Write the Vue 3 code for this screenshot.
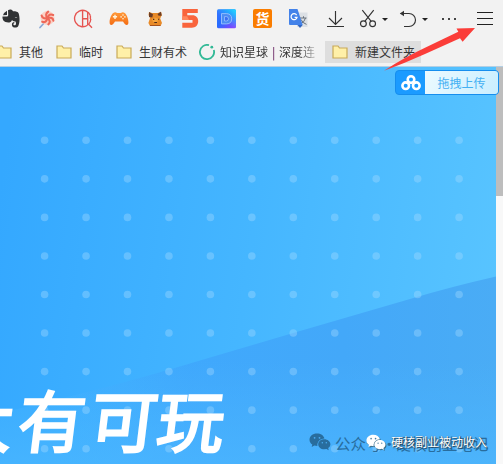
<script setup>
const dots = []
for (let row = 0; row < 9; row++) {
  for (let col = 0; col < 11; col++) {
    dots.push({ x: 44.6 + col * 41.45, y: 73.3 + row * 38.55 })
  }
}
</script>

<template>
  <div class="window">
    <header class="chrome">
      <div class="toolbar">
        <div class="extensions">
          <svg class="ext" viewBox="0 0 20 20">
            <path d="M2 6.2L6 6V1.7Q2.6 3.6 2 6.2Z" fill="#303234" />
            <path d="M7 1.2C9-.1 11.3.7 12 2.2C15 2.3 17 2.5 17.6 4.2C19 8 18.8 14 17.3 17C16.2 19.2 12 19.1 11.2 17C10.4 14.9 11.3 13 13.3 12.9V14.3C12 14.5 12.1 16.2 13.4 16.3C15.4 16.4 15.2 13.7 14.5 12.4C12.5 12.5 11.5 11.9 11 11C10 14 7 13.8 4.5 13C2.2 12.3 1.2 9.6 1.5 7.4H6.3Q7.2 7.4 7.2 6.3Z" fill="#303234" />
            <path d="M13.6 8.2Q15.2 7.3 16.3 9Z" fill="#eee" />
          </svg>
          <svg class="ext" viewBox="0 0 20 20">
            <path d="M8 13L3 18.5" stroke="#8ca9d5" stroke-width="1.7" stroke-linecap="round" />
            <circle cx="10.5" cy="9" r="7" fill="#fbd0c4" />
            <g fill="none" stroke="#ee6858" stroke-width="2.1" stroke-linecap="round">
              <path d="M10.5 9Q7.4 5.6 11.2 2.7" />
              <path d="M10.5 9Q12 4 16.2 6" />
              <path d="M10.5 9Q15.8 7.7 16.4 11.6" />
              <path d="M10.5 9Q14.5 12.6 11.4 15.4" />
              <path d="M10.5 9Q9.2 14.2 5.2 12.8" />
              <path d="M10.5 9Q5.5 10.3 4.6 6.6" />
            </g>
          </svg>
          <svg class="ext" viewBox="0 0 20 20" fill="none" stroke="#e65451" stroke-width="1.35">
            <path d="M14.5 16.2A8.2 8.2 0 1 1 17.4 6.5M17.8 10A8.2 8.2 0 0 1 15.6 15.2L19 18.8" />
            <path d="M9.6 1V17.7M9.6 9.7H14.7M14.7 3V16.2M17.4 6.5V10" />
          </svg>
          <svg class="ext" viewBox="0 0 20 20">
            <defs>
              <linearGradient id="pad" x2="0" y2="1"><stop stop-color="#ff9a3b" /><stop offset="1" stop-color="#f46c13" /></linearGradient>
            </defs>
            <path d="M5.2 3.5Q7 3 8 4H12Q13 3 14.8 3.5C18 4.2 20.4 13 19 15.3C17.6 17.4 15.3 14.5 14 12.4H6C4.7 14.5 2.4 17.4 1 15.3C-.4 13 2 4.2 5.2 3.5Z" fill="url(#pad)" />
            <path d="M6 5.7V10M3.9 7.8H8.1" stroke="#fff4dd" stroke-width="1.4" />
            <g fill="#fff4dd"><circle cx="14" cy="6" r=".8" /><circle cx="14" cy="9.8" r=".8" /><circle cx="12.1" cy="7.9" r=".8" /><circle cx="15.9" cy="7.9" r=".8" /></g>
          </svg>
          <svg class="ext" viewBox="0 0 20 20">
            <path d="M4 3L7 4H13L16 2.7L16.8 6L15.2 9.5L17 14L15.5 17H5L3.4 14L5 9L3.5 6Z" fill="#e88a28" />
            <path d="M4 3L8 5.3L7.3 8.6L4 8ZM12.5 5L16 2.7L16.7 6.7L13.6 6.7Z" fill="#6b3d25" />
            <path d="M7 10L10 8.5L14 10L12 13H8Z" fill="#f5a33c" />
            <path d="M8 10.4H9.3M13 10.2H14.2M9.3 13.5H12" stroke="#4e2c19" stroke-width="1.1" />
            <path d="M5 16.5H15.5" stroke="#a65320" />
          </svg>
          <svg class="ext" viewBox="0 0 20 20">
            <path d="M1.3 0H16.8V4H6.3V6.2H11.5C15 6.2 17.2 8.8 17.2 12.1C17.2 16.2 14.6 18.8 10.8 18.8H1.3V13.7H11.5V11H1.3Z" fill="#f9643c" />
            <path d="M1.3 7.2H6.2L8 11H1.3Z" fill="#ff875d" />
          </svg>
          <svg class="ext" viewBox="0 0 20 20">
            <defs>
              <linearGradient id="violet" x1="0" x2="1" y2="1"><stop stop-color="#3876ff" /><stop offset=".45" stop-color="#266cff" /><stop offset="1" stop-color="#9a3cff" /></linearGradient>
              <linearGradient id="cyan" x1="0" y1="1" x2="1" y2="0"><stop offset=".4" stop-color="#20cffc" stop-opacity="0" /><stop offset="1" stop-color="#20e1ff" /></linearGradient>
            </defs>
            <rect x="0" y=".2" width="19" height="19" rx="1.5" fill="url(#violet)" />
            <rect x="0" y=".2" width="19" height="19" rx="1.5" fill="url(#cyan)" />
            <path d="M4.5 4.6H9.7Q14.7 5 14.7 9.8Q14.7 14.7 9.7 14.9H4.5Z" fill="#4c8cf3" stroke="#a4caff" stroke-width=".8" />
            <path d="M7.5 7.6H9.5Q11.5 7.8 11.5 9.8Q11.5 11.8 9.5 12H7.5Z" fill="#3b6ef2" stroke="#a4caff" stroke-width=".7" />
          </svg>
          <span class="ext cargo">货</span>
          <svg class="ext" viewBox="0 0 20 20">
            <rect x="8" y="3.5" width="10.5" height="14.5" fill="#dce0e5" />
            <path d="M11 9H17.5M14.5 7.3V9M16.5 9Q15.5 13 11.5 15M12 10.5Q13.5 14 17.5 15.4" fill="none" stroke="#68717b" stroke-width="1" />
            <path d="M0 0H8.5L13.7 16H1Q0 16 0 15Z" fill="#4382e9" />
            <path d="M8.5 15.9H13.7L11 19Z" fill="#3266c0" />
            <path d="M7.6 6.1A3 3 0 1 0 8 8.4H5.6" fill="none" stroke="#fff" stroke-width="1.25" />
          </svg>
        </div>
        <div class="actions">
          <svg class="download" viewBox="0 0 18 20"><path d="M9.5 2V15.5M3 9L9.5 15.5L16 9M1 17.5H18" /></svg>
          <svg class="scissors" viewBox="0 0 18 20">
            <path d="M3.3 1.2L12.2 12.4M14.7 1.2L5.8 12.4" />
            <circle cx="4.4" cy="14.7" r="2.9" /><circle cx="13.6" cy="14.7" r="2.9" />
          </svg>
          <span class="caret"></span>
          <svg class="undo" viewBox="0 0 18 20"><path d="M1.5 4.5H10A6.2 6.2 0 0 1 10 17.5H5" /><path d="M5 1.7L.8 4.5L5 7.3Z" class="head" /></svg>
          <span class="caret"></span>
          <span class="more"><i></i><i></i><i></i></span>
          <span class="menu"><i></i><i></i><i></i></span>
        </div>
      </div>
      <nav class="bookmarks">
        <span class="mark"><svg class="folder" viewBox="0 0 16 14"><path d="M1 1H6L7.5 3H15V13H1Z" /></svg>其他</span>
        <span class="mark"><svg class="folder" viewBox="0 0 16 14"><path d="M1 1H6L7.5 3H15V13H1Z" /></svg>临时</span>
        <span class="mark"><svg class="folder" viewBox="0 0 16 14"><path d="M1 1H6L7.5 3H15V13H1Z" /></svg>生财有术</span>
        <span class="mark planet">
          <svg class="ring" viewBox="0 0 16 16"><path d="M10 1.2A7.1 7.1 0 1 0 14.8 6" /><circle cx="12.8" cy="3.2" r="1.4" /></svg>
          <span class="fade">知识星球<b>|</b>深度连</span>
        </span>
        <span class="mark chip"><svg class="folder" viewBox="0 0 16 14"><path d="M1 1H6L7.5 3H15V13H1Z" /></svg>新建文件夹</span>
      </nav>
    </header>

    <main class="viewport">
      <section class="hero">
        <svg class="backdrop" viewBox="0 0 496 397">
          <defs>
            <linearGradient id="wedge" gradientUnits="userSpaceOnUse" x1="60" y1="0" x2="496" y2="0">
              <stop stop-color="#3da5fd" stop-opacity="0" />
              <stop offset=".3" stop-color="#3fa6fc" stop-opacity=".85" />
              <stop offset=".65" stop-color="#43a8f9" />
              <stop offset="1" stop-color="#4aacf5" />
            </linearGradient>
            <linearGradient id="lift" x2="0" y2="1"><stop offset=".45" stop-color="#4db8ff" stop-opacity="0" /><stop offset="1" stop-color="#4db8ff" stop-opacity=".65" /></linearGradient>
          </defs>
          <path d="M0 346Q110 321 200 293.5L300 264L410 232Q450 220 496 209.5V397H0Z" fill="url(#wedge)" />
          <path d="M0 346Q110 321 200 293.5L300 264L410 232Q450 220 496 209.5V397H0Z" fill="url(#lift)" />
          <circle v-for="(d, i) in dots" :key="i" :cx="d.x" :cy="d.y" r="3.8" fill="#a9dcff" fill-opacity=".37" />
        </svg>
        <h1 class="title"><span>大</span><span>有</span><span>可</span><span>玩</span></h1>
        <div class="account">
          <svg class="wechat" viewBox="0 0 22 18"><g fill="currentColor"><path d="M8 .5C3.6.5.5 3.2.5 6.7C.5 8.7 1.6 10.5 3.3 11.6L2.7 14L5.4 12.6L8.4 13C8 8.6 11 5.6 15.4 5.4C14.7 2.5 11.7.5 8 .5Z" /><path d="M15.2 6.2C11.8 6.2 9.2 8.4 9.2 11.3S11.8 16.3 15.2 16.3L17.5 16L19.7 17.2L19.2 15.1C20.6 14.2 21.4 12.8 21.4 11.3C21.4 8.4 18.6 6.2 15.2 6.2Z" /></g><g fill="#4badf5"><circle cx="5.6" cy="4.8" r=".9" /><circle cx="10.5" cy="4.8" r=".9" /><circle cx="13.3" cy="9.7" r=".75" /><circle cx="17.3" cy="9.7" r=".75" /></g></svg>
          <span>公众号</span><em>·</em><span>硬核创业笔记</span>
        </div>
        <div class="credit">
          <svg class="wechat" viewBox="0 0 22 18"><g fill="currentColor"><path d="M8 .5C3.6.5.5 3.2.5 6.7C.5 8.7 1.6 10.5 3.3 11.6L2.7 14L5.4 12.6L8.4 13C8 8.6 11 5.6 15.4 5.4C14.7 2.5 11.7.5 8 .5Z" /><path d="M15.2 6.2C11.8 6.2 9.2 8.4 9.2 11.3S11.8 16.3 15.2 16.3L17.5 16L19.7 17.2L19.2 15.1C20.6 14.2 21.4 12.8 21.4 11.3C21.4 8.4 18.6 6.2 15.2 6.2Z" /></g><g fill="#487c9e"><circle cx="5.6" cy="4.8" r=".9" /><circle cx="10.5" cy="4.8" r=".9" /><circle cx="13.3" cy="9.7" r=".75" /><circle cx="17.3" cy="9.7" r=".75" /></g></svg>
          <span>硬核副业被动收入</span>
        </div>
      </section>
      <div class="scrollbar"><div class="thumb"></div></div>
    </main>

    <button class="upload">
      <span class="cloud">
        <svg viewBox="0 0 20 16"><circle cx="10" cy="4.6" r="3.3" /><circle cx="4.7" cy="10.7" r="3.3" /><circle cx="15.3" cy="10.7" r="3.3" /></svg>
      </span>
      <span class="label">拖拽上传</span>
    </button>
    <svg class="pointer" viewBox="0 0 92 45"><path d="M0 43.7Q20 30.5 41 20.7L74.3 4.7L72.5 1.6L91 1L78.6 14.7L76 11.3L41 27Q20 36.5 0 43.7Z" /></svg>
  </div>
</template>

<style>
body { margin: 0; overflow: hidden; }
</style>

<style scoped>
.window {
  position: relative;
  width: 503px;
  height: 464px;
  overflow: hidden;
  display: flex;
  flex-direction: column;
  background: #f2f2f2;
  font-family: "Noto Sans CJK SC", sans-serif;
}
.chrome { height: 66px; border-bottom: 1px solid #b4cfe3; flex: none; }
.toolbar { display: flex; height: 38px; align-items: center; }
.extensions { display: flex; gap: 16px; padding-left: 1px; }
.ext { width: 20px; height: 20px; flex: none; display: block; }
.cargo {
  box-sizing: border-box;
  width: 19px;
  height: 19px;
  margin-right: 1px;
  border-radius: 2px;
  background: #fa7d00;
  color: #fff;
  font-size: 14px;
  font-weight: 700;
  line-height: 18px;
  text-align: center;
}
.actions { display: flex; align-items: center; padding-left: 17px; }
.actions svg { width: 18px; height: 20px; fill: none; stroke: #333; stroke-width: 1.15; flex: none; }
.actions .head { fill: #333; stroke: none; }
.scissors { margin-left: 15px; }
.caret { border: 3px solid transparent; border-top: 3px solid #222; border-bottom: 0; margin-left: 5px; }
.undo { margin-left: 11px; }
.more { display: flex; gap: 4px; margin-left: 14px; }
.more i { width: 2px; height: 2px; background: #444; }
.menu { display: flex; flex-direction: column; gap: 5px; margin-left: 21px; margin-top: -1px; width: 16px; }
.menu i { height: 1px; background: #222; }
.bookmarks { display: flex; height: 28px; align-items: center; margin-left: -4px; font-size: 12px; color: #363636; white-space: nowrap; }
.mark { display: flex; align-items: center; gap: 7px; height: 22px; margin-right: 13px; line-height: 22px; }
.folder { width: 16px; height: 14px; flex: none; fill: #fff0a8; stroke: #c9aa58; stroke-width: 1.2; }
.planet { gap: 5px; margin: 0 5px 0 -1px; }
.ring { width: 16px; height: 16px; fill: none; stroke: #32b996; stroke-width: 1.8; }
.ring circle { fill: #32b996; stroke: none; }
.fade { width: 100px; -webkit-mask-image: linear-gradient(90deg, #000 78%, transparent 102%); mask-image: linear-gradient(90deg, #000 78%, transparent 102%); }
.fade b { display: inline-block; width: 11px; text-align: center; font-weight: 500; color: #74356f; }
.chip { box-sizing: border-box; width: 96px; padding-left: 7px; background: #dedede; margin: 0; }
.viewport { display: flex; flex: 1; min-height: 0; }
.hero { position: relative; width: 496px; overflow: hidden; background: linear-gradient(98deg, #34a8ff 3%, #45b6ff 50%, #58c4ff 96%); }
.backdrop { display: block; width: 496px; height: 397px; }
.title {
  position: absolute;
  left: -53px;
  top: 311px;
  display: flex;
  margin: 0;
  color: #fff;
  font-size: 67px;
  line-height: 80px;
  font-weight: 400;
  -webkit-text-stroke: 2.4px #fff;
}
.title span { display: block; width: 71px; transform: skewX(-7deg); }
.title span:nth-child(2) { margin-left: 1px; }
.title span:nth-child(3) { width: 67px; margin-left: 1px; }
.account { position: absolute; left: 309px; top: 364px; display: flex; align-items: center; height: 24px; font-size: 15.5px; line-height: 24px; color: #286d9e; white-space: nowrap; }
.account .wechat { width: 22px; height: 18px; margin-right: 4px; margin-top: -3px; }
.account em { width: 14px; text-align: center; font-style: normal; }
.credit { position: absolute; left: 366px; top: 363px; display: flex; align-items: center; height: 24px; color: #fff; font-size: 12px; line-height: 24px; white-space: nowrap; text-shadow: 1px 1px 1px #20435b, 0 0 1px #31566f; }
.credit .wechat { width: 20px; height: 17px; margin-right: 5px; filter: drop-shadow(1px 1px 0 #3b718e); }
.scrollbar { width: 7px; background: #f8f8f8; }
.thumb { height: 129px; background: #bdbdbd; }
.upload {
  position: absolute;
  left: 395px;
  top: 70px;
  box-sizing: border-box;
  display: flex;
  width: 104px;
  height: 25px;
  padding: 0;
  border: 1px solid #168eee;
  border-radius: 4px;
  overflow: hidden;
  background: #1b9bff;
  font-family: inherit;
}
.cloud { display: flex; width: 29px; align-items: center; justify-content: center; }
.cloud svg { width: 20px; height: 16px; fill: none; stroke: #fff; stroke-width: 2.6; }
.label { flex: 1; background: linear-gradient(115deg, #ecfaff, #c9eeff); color: #43b0f3; font-size: 12px; line-height: 23px; text-align: center; }
.pointer { position: absolute; left: 384px; top: 27px; width: 92px; height: 45px; fill: #fb3d39; }
</style>
